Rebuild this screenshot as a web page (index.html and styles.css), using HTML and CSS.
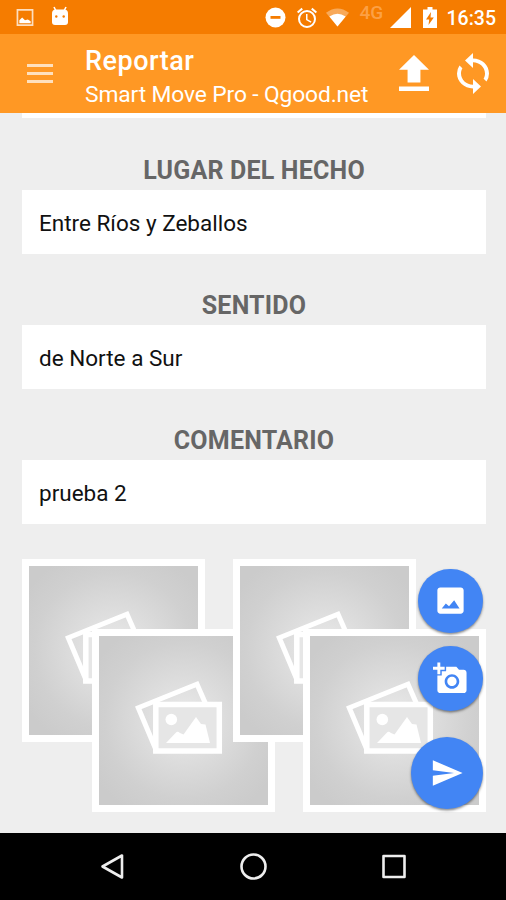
FILE: index.html
```html
<!DOCTYPE html>
<html lang="es">
<head>
<meta charset="utf-8">
<title>Reportar</title>
<link rel="stylesheet" href="styles.css">
</head>
<body>
<svg class="defs" aria-hidden="true">
  <defs>
    <radialGradient id="glow" cx="50%" cy="50%" r="62%">
      <stop offset="0" stop-color="#ececec"/>
      <stop offset=".35" stop-color="#dedede"/>
      <stop offset=".75" stop-color="#d0d0d0"/>
      <stop offset="1" stop-color="#cbcbcb"/>
    </radialGradient>
    <symbol id="photo" viewBox="0 0 183 183">
      <path fill="#fff" d="M0 0h183v183H0z"/>
      <path fill="url(#glow)" d="M7 7h169v169H7z"/>
      <path fill="none" stroke="#fff" stroke-width="5" d="M113.500 74.500L105 55.200L46.300 78.800L64.500 122"/>
      <path fill="#e6e6e6" stroke="#fff" stroke-width="5.500" d="M63.800 75.500h63.500v46.500H63.800z"/>
      <circle cx="79.300" cy="90.500" r="5.800" fill="#fff"/>
      <path fill="#fff" d="M74 114L84.500 103Q86 102 88 104L91.500 105.500L104 88L109 95L113.500 95.500L118 114z"/>
    </symbol>
  </defs>
</svg>
<div class="screen">
  <header class="status">
    <svg class="s-image" viewBox="0 0 18 18"><path fill="none" stroke="#fff" stroke-opacity=".75" stroke-width="1.800" d="M1 1h16v16H1z"/><path fill="#fff" d="M3 15v-3l3-3 3 3 3-1 3 2v2z"/></svg>
    <svg class="s-android" viewBox="0 0 18 20"><path stroke="#fff" stroke-width="1.600" d="M3 1l2 4M15 1l-2 4"/><path fill="#fff" d="M5 3.500h8q4 0 4 4V16q0 3-3 3H4q-3 0-3-3V7.500q0-4 4-4z"/><circle cx="5.300" cy="10.500" r="1.200" fill="#f57c00"/><circle cx="12.700" cy="10.500" r="1.200" fill="#f57c00"/></svg>
    <span class="spacer"></span>
    <svg class="s-dnd" viewBox="0 0 21 21"><circle cx="10.500" cy="10.500" r="10" fill="#fff"/><path fill="#f57c00" d="M5.500 9h10v2.800h-10z"/></svg>
    <svg class="s-alarm" viewBox="2 2 20 20"><path fill="#fff" d="M22 5.720l-4.600-3.860-1.290 1.530 4.600 3.860L22 5.720zM7.880 3.390L6.600 1.860 2 5.710l1.290 1.530 4.590-3.850zM12.500 8H11v6l4.750 2.850.75-1.230-4-2.370V8zM12 4a9 9 0 1 0 0 18 9 9 0 0 0 0-18zm0 16a7 7 0 1 1 0-14 7 7 0 0 1 0 14z"/></svg>
    <svg class="s-wifi" viewBox="0 0 24 19"><path fill="#fff" opacity=".35" d="M0 4.500Q12-4.500 24 4.500L12 19z"/><path fill="#fff" d="M3.500 8.500Q12 2.500 20.500 8.500L12 19z"/></svg>
    <span class="net">4G</span>
    <svg class="s-signal" viewBox="0 0 21 21"><path fill="#fff" d="M0 21L21 0v21z"/></svg>
    <svg class="s-battery" viewBox="0 0 14 21"><path fill="#fff" d="M4.500 0h5v2.500H14V21H0V2.500h4.500z"/><path fill="#f57c00" d="M8 5L3 12.500h3.200L5.500 18l5.300-7.500H7.500z"/></svg>
    <span class="clock">16:35</span>
  </header>
  <div class="appbar">
    <div class="menu"><i></i><i></i><i></i></div>
    <div class="titles">
      <h1><span>Reportar</span></h1>
      <p><span>Smart Move Pro - Qgood.net</span></p>
    </div>
    <svg class="upload" viewBox="5 3 14 17" preserveAspectRatio="none"><path fill="#fff" d="M9 16h6v-6h4l-7-7-7 7h4zm-4 1.900h14V20H5z"/></svg>
    <svg class="sync" viewBox="4 1 16 22" preserveAspectRatio="none"><path fill="#fff" d="M12 4V1L8 5l4 4V6c3.310 0 6 2.690 6 6 0 1.010-.25 1.970-.7 2.800l1.460 1.460A7.930 7.930 0 0 0 20 12c0-4.420-3.580-8-8-8zm0 14c-3.310 0-6-2.690-6-6 0-1.010.25-1.970.7-2.800L5.240 7.740A7.930 7.930 0 0 0 4 12c0 4.420 3.580 8 8 8v3l4-4-4-4v3z"/></svg>
  </div>
  <main class="content">
    <div class="field cut"></div>
    <h2><span>LUGAR DEL HECHO</span></h2>
    <div class="field"><span>Entre Ríos y Zeballos</span></div>
    <h2><span>SENTIDO</span></h2>
    <div class="field"><span>de Norte a Sur</span></div>
    <h2><span>COMENTARIO</span></h2>
    <div class="field"><span>prueba 2</span></div>
    <div class="photos">
      <svg class="photo"><use href="#photo"/></svg>
      <svg class="photo low"><use href="#photo"/></svg>
      <svg class="photo"><use href="#photo"/></svg>
      <svg class="photo low"><use href="#photo"/></svg>
    </div>
    <div class="fabs">
      <div class="fab"><svg viewBox="0 0 24 24"><path fill="#fff" d="M21 19V5c0-1.100-.9-2-2-2H5c-1.100 0-2 .9-2 2v14c0 1.100.9 2 2 2h14c1.100 0 2-.9 2-2zM6 17.500l2.800-3.500 2.200 2 3.500-4.200 3.700 5.700z"/></svg></div>
      <div class="fab"><svg viewBox="0 0 24 24"><path fill="#fff" d="M3 4V1h2v3h3v2H5v3H3V6H0V4h3zm3 6V7h3V4h7l1.830 2H21c1.100 0 2 .9 2 2v12c0 1.100-.9 2-2 2H5c-1.100 0-2-.9-2-2V10h3zm7 9c2.760 0 5-2.240 5-5s-2.240-5-5-5-5 2.240-5 5 2.240 5 5 5zm-3.200-5c0 1.770 1.430 3.200 3.200 3.200s3.200-1.430 3.200-3.200-1.430-3.200-3.200-3.200-3.200 1.430-3.200 3.200z"/></svg></div>
      <div class="fab send"><svg viewBox="0 0 24 24"><path fill="#fff" d="M2.010 21L23 12 2.010 3 2 10l15 2-15 2z"/></svg></div>
    </div>
  </main>
  <nav class="nav">
    <svg viewBox="0 0 30 30"><path d="M5.500 14.500L25 3.500v22z"/></svg>
    <svg viewBox="0 0 30 30"><circle cx="15.500" cy="14.500" r="12"/></svg>
    <svg viewBox="0 0 30 30"><path d="M4.500 4h21v21h-21z"/></svg>
  </nav>
</div>
</body>
</html>
```
FILE: styles.css
```css
* { box-sizing: border-box; }
body { margin: 0; font-family: Roboto, "Liberation Sans", sans-serif; }
svg { display: block; flex: none; }
h1, h2, p { margin: 0; }
.defs { position: absolute; width: 0; height: 0; }
.screen { width: 506px; height: 900px; display: flex; flex-direction: column; overflow: hidden; background: #eee; }

.status { height: 34px; flex: none; display: flex; align-items: flex-start; background: #f57c00; padding: 0 11px 0 16px; color: #fff; }
.spacer { flex: 1; }
.s-image { width: 18px; height: 17px; margin-top: 9px; }
.s-android { width: 18px; height: 20px; margin: 6px 0 0 17px; }
.s-dnd { width: 21px; height: 21px; margin-top: 7px; }
.s-alarm { width: 20px; height: 20px; margin: 8px 0 0 11px; overflow: visible; }
.s-wifi { width: 23px; height: 19px; margin: 8px 0 0 9px; }
.net { font-size: 19px; font-weight: 500; line-height: 22px; width: 25px; margin: 2px 5px 0 11px; color: #ffad5c; opacity: .75; }
.s-signal { width: 21px; height: 21px; margin-top: 7px; }
.s-battery { width: 14px; height: 21px; margin: 7px 10px 0 12px; }
.clock { font-size: 19.500px; font-weight: 500; line-height: 24px; margin-top: 7px; width: 48.500px; white-space: nowrap; }

.appbar { height: 79px; flex: none; display: flex; background: #ff9824; padding: 0 17px 0 27px; color: #fff; }
.menu { width: 26px; height: 19px; margin-top: 30px; display: flex; flex-direction: column; justify-content: space-between; }
.menu i { height: 3px; background: #ffe0bd; }
.titles { flex: 1; margin-left: 32px; white-space: nowrap; }
.titles h1 { font-size: 27px; font-weight: 500; line-height: 32px; margin-top: 11px; letter-spacing: .5px; }
.titles p { font-size: 22.800px; line-height: 28px; margin-top: 4px; letter-spacing: -.13px; }
.upload { width: 30px; height: 36px; margin-top: 21px; }
.sync { width: 32px; height: 41px; margin: 19px 0 0 28px; }

.content { position: relative; flex: 1; padding: 0 20px 0 22px; }
.field { height: 64px; display: flex; align-items: center; background: #fff; padding: 1px 17px 0; font-size: 22.500px; color: #111; }
.cut { height: 5px; }
.content h2 { height: 71px; padding-top: 37px; text-align: center; font-size: 25px; line-height: 30px; font-weight: 700; color: #666; letter-spacing: .2px; }
.cut + h2 { height: 72px; padding-top: 38px; }
.photos { display: flex; align-items: flex-start; margin: 35px 0 0 -.5px; }
.photo { width: 183px; height: 183px; margin-right: -42.500px; }
.photo:nth-child(odd) { margin-right: -112.500px; }
.photo.low { margin-top: 70px; }

.fabs { position: absolute; top: 455.500px; right: 23.500px; display: flex; flex-direction: column; align-items: flex-end; gap: 13px; }
.fab { width: 64.500px; height: 64.500px; border-radius: 50%; background: #4285f4; box-shadow: 0 1.500px 2.500px rgba(0,0,0,.45); display: flex; align-items: center; justify-content: center; }
.fab svg { width: 35px; height: 35px; }
.fab.send { width: 72px; height: 72px; margin-top: 13px; }
.fab.send svg { width: 34px; height: 34px; }

.nav { height: 67px; flex: none; display: flex; justify-content: center; align-items: center; gap: 111px; background: #000; }
.nav svg { width: 30px; height: 30px; fill: none; stroke: #eee; stroke-width: 2.600; stroke-linejoin: round; }
```
